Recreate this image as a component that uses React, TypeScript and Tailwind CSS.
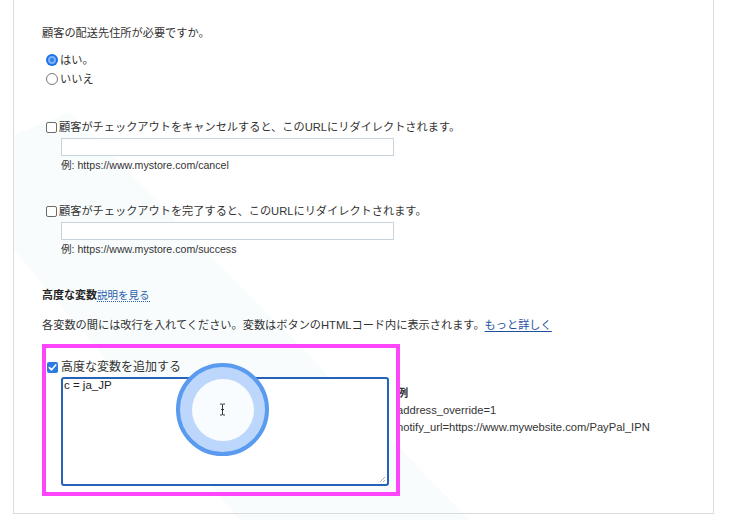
import React from 'react';

const font = { fontFamily: '"Liberation Sans", "Noto Sans CJK JP", sans-serif' };

const Radio = ({ checked }: { checked?: boolean }) =>
  checked ? (
    <span className="inline-flex items-center justify-center w-[12px] h-[12px] rounded-full bg-[#1a73e8] mr-[2px]">
      <span className="block w-[8px] h-[8px] rounded-full bg-[#2f80ed] border-[2px] border-[#7fb0f5]" />
    </span>
  ) : (
    <span className="inline-block w-[12px] h-[12px] rounded-full border border-[#777] bg-white mr-[2px]" />
  );

const Checkbox = ({ checked }: { checked?: boolean }) =>
  checked ? (
    <span className="inline-flex items-center justify-center w-[11px] h-[11px] rounded-[2px] bg-[#2a7be4] mr-[3px]">
      <svg width="9" height="9" viewBox="0 0 10 10" fill="none">
        <path d="M1.5 5.2 4 7.6 8.6 2.2" stroke="white" strokeWidth="1.8" strokeLinecap="round" strokeLinejoin="round" />
      </svg>
    </span>
  ) : (
    <span className="inline-block w-[11px] h-[11px] rounded-[2px] border border-[#6b6b6b] bg-white mr-[2px]" />
  );

const UrlField = ({ label, example }: { label: string; example: string }) => (
  <div>
    <div className="flex items-center h-[16px] ml-[4px] text-[11.2px] text-[#333]">
      <Checkbox />
      <span>{label}</span>
    </div>
    <div className="ml-[19px] mt-[3px] w-[333px] h-[18px] border border-[#c9d3dc] bg-white" />
    <div className="ml-[19px] mt-[1px] h-[16px] leading-[16px] text-[10.6px] text-[#333]">{example}</div>
  </div>
);

export default function App() {
  return (
    <div className="relative w-[731px] h-[520px] bg-white overflow-hidden" style={font}>
      {/* faint watermark */}
      <svg className="absolute left-0 top-0" width="731" height="520">
        <polygon points="14,250 14,135 70,112 470,520 240,520" fill="#f9fcfc" />
      </svg>

      <div className="relative ml-[13px] w-[701px] h-[514px] border-x border-b border-[#dcdcdc] pl-[28px] pt-[25px]">
        <div className="h-[16px] leading-[16px] text-[11.2px] text-[#333]">顧客の配送先住所が必要ですか。</div>
        <div className="mt-[11px] flex items-center h-[16px] ml-[4px] text-[11.2px] text-[#333]">
          <Radio checked />
          <span>はい。</span>
        </div>
        <div className="mt-[3px] flex items-center h-[16px] ml-[4px] text-[11.2px] text-[#333]">
          <Radio />
          <span>いいえ</span>
        </div>

        <div className="mt-[32px]">
          <UrlField
            label="顧客がチェックアウトをキャンセルすると、このURLにリダイレクトされます。"
            example="例: https://www.mystore.com/cancel"
          />
        </div>
        <div className="mt-[30px]">
          <UrlField
            label="顧客がチェックアウトを完了すると、このURLにリダイレクトされます。"
            example="例: https://www.mystore.com/success"
          />
        </div>

        <div className="mt-[30px] h-[16px] leading-[16px] text-[11px] text-[#222]">
          <span className="font-bold">高度な変数</span>
          <span className="text-[10.5px] text-[#2a5fae] border-b border-dotted border-[#2a5fae]">説明を見る</span>
        </div>
        <div className="mt-[14px] h-[16px] leading-[16px] text-[11.2px] text-[#333]">
          各変数の間には改行を入れてください。変数はボタンのHTMLコード内に表示されます。
          <span className="text-[#1d4f9e] underline underline-offset-2">もっと詳しく</span>
        </div>

        <div className="mt-[26px] flex items-center h-[16px] ml-[5px] text-[12px] text-[#333]">
          <Checkbox checked />
          <span>高度な変数を追加する</span>
        </div>
        <div className="flex mt-[2px]">
          <div className="ml-[19px] w-[328px] h-[109px] border-[2px] border-[#2463b8] rounded-[3px] bg-white relative">
            <div className="pl-[1px] leading-[13px] text-[11.5px] text-[#222]">c = ja_JP</div>
            <svg className="absolute right-[1px] bottom-[1px]" width="7" height="7" viewBox="0 0 7 7">
              <path d="M6 1 1 6M6 4 4 6" stroke="#999" strokeWidth="0.8" />
            </svg>
          </div>
          <div className="ml-[8px] mt-[8px] text-[11.2px] text-[#333] leading-[17px]">
            <div className="font-bold">例</div>
            <div>address_override=1</div>
            <div>notify_url=https://www.mywebsite.com/PayPal_IPN</div>
          </div>
        </div>
      </div>

      {/* highlight frame */}
      <div className="absolute left-[42px] top-[344px] w-[358px] h-[152px] border-[4px] border-[#ff45fb]" />

      {/* click indicator */}
      <div className="absolute left-[176px] top-[363px] w-[93px] h-[93px] rounded-full border-[4px] border-[#5a9bf0] bg-[#bcd7fb] flex items-center justify-center">
        <div className="w-[62px] h-[62px] rounded-full bg-[#f9fcff] flex items-center justify-center">
          <svg width="7" height="13" viewBox="0 0 7 13" fill="none">
            <path d="M1 1h1.5c.6 0 1 .4 1 1v9c0 .6.4 1 1 1H6M6 1H4.5c-.6 0-1 .4-1 1M3.5 11c0 .6-.4 1-1 1H1M2 6.5h3" stroke="#222" strokeWidth="0.9" />
          </svg>
        </div>
      </div>
    </div>
  );
}
